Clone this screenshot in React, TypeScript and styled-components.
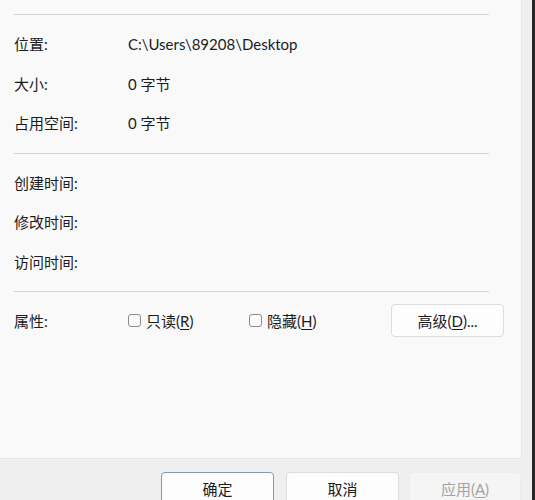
import React from 'react'
import styled, { createGlobalStyle } from 'styled-components'

const GlobalStyle = createGlobalStyle`
  html, body {
    margin: 0;
    padding: 0;
    background: #efefef;
    font-family: Lato, "Noto Sans CJK SC", sans-serif;
    color: #1b1b1b;
  }
`

const Screen = styled.div`
  display: flex;
  width: 535px;
  height: 500px;
  overflow: hidden;
`

const Window = styled.div`
  width: 532px;
  display: flex;
  flex-direction: column;
  background: #efefef;
`

const Edge = styled.div`
  width: 3px;
  background: #262626;
`

const Panel = styled.div`
  flex-shrink: 0;
  width: 522px;
  height: 459px;
  box-sizing: border-box;
  background: #f9f9f9;
  border-right: 1px solid #e8e8e8;
  border-bottom: 1px solid #e6e6e6;
  padding: 14px 32px 0 14px;
`

const Divider = styled.hr`
  border: none;
  height: 1px;
  background: #d4d4d4;
  margin: 0;
`

const Section = styled.div`
  padding: 9px 0 10px;
`

const Row = styled.div`
  display: flex;
  align-items: center;
  height: 39.5px;
  font-size: 15px;
`

const Label = styled.div`
  width: 114px;
  flex-shrink: 0;
`

const Value = styled.div`
  flex: 1;
`

const Check = styled.label<{ $width: number }>`
  display: flex;
  align-items: center;
  width: ${(p) => p.$width}px;
  gap: 5px;
`

const Box = styled.span`
  width: 13px;
  height: 13px;
  box-sizing: border-box;
  border: 1px solid #8a8a8a;
  border-radius: 3px;
  background: #fbfbfb;
`

const Key = styled.span`
  text-decoration: underline;
  text-underline-offset: 2px;
`

const Button = styled.button<{ $disabled?: boolean; $default?: boolean }>`
  width: 113px;
  height: 33px;
  box-sizing: border-box;
  font-family: inherit;
  font-size: 15px;
  color: ${(p) => (p.$disabled ? '#a3a3a3' : '#1b1b1b')};
  background: ${(p) => (p.$disabled ? '#f5f5f5' : '#fdfdfd')};
  border: 1px solid
    ${(p) => (p.$default ? '#7d9ea5' : p.$disabled ? '#ececec' : '#dcdcdc')};
  border-radius: 4px;
  padding: 0;
  &:disabled {
    width: 112px;
    margin-left: -2px;
  }
`

const AdvancedButton = styled(Button)`
  margin-left: auto;
  margin-right: -15px;
`

const Footer = styled.div`
  display: flex;
  justify-content: flex-end;
  gap: 12px;
  padding: 13px 11px 0 0;
`

export default function App() {
  return (
    <>
      <GlobalStyle />
      <Screen>
        <Window>
          <Panel>
            <Divider />
            <Section>
              <Row>
                <Label>位置:</Label>
                <Value>C:\Users\89208\Desktop</Value>
              </Row>
              <Row>
                <Label>大小:</Label>
                <Value>0 字节</Value>
              </Row>
              <Row>
                <Label>占用空间:</Label>
                <Value>0 字节</Value>
              </Row>
            </Section>
            <Divider />
            <Section>
              <Row>
                <Label>创建时间:</Label>
              </Row>
              <Row>
                <Label>修改时间:</Label>
              </Row>
              <Row>
                <Label>访问时间:</Label>
              </Row>
            </Section>
            <Divider />
            <Section>
              <Row>
                <Label>属性:</Label>
                <Check $width={121}>
                  <Box />
                  <span>
                    只读(<Key>R</Key>)
                  </span>
                </Check>
                <Check $width={120}>
                  <Box />
                  <span>
                    隐藏(<Key>H</Key>)
                  </span>
                </Check>
                <AdvancedButton>
                  高级(<Key>D</Key>)...
                </AdvancedButton>
              </Row>
            </Section>
          </Panel>
          <Footer>
            <Button $default>确定</Button>
            <Button>取消</Button>
            <Button $disabled disabled>
              应用(<Key>A</Key>)
            </Button>
          </Footer>
        </Window>
        <Edge />
      </Screen>
    </>
  )
}
